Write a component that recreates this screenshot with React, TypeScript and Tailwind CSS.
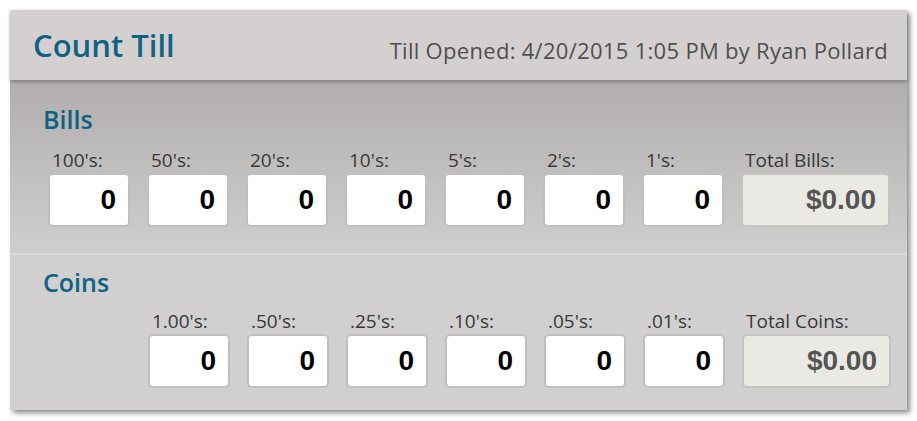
const bills = ["100's:", "50's:", "20's:", "10's:", "5's:", "2's:", "1's:"];
const coins = ["1.00's:", ".50's:", ".25's:", ".10's:", ".05's:", ".01's:"];

const font = { fontFamily: '"Open Sans", "DejaVu Sans", sans-serif' };

const CountField = ({ label }: { label: string }) => (
  <div className="flex w-[82px] shrink-0 flex-col">
    <div className="mb-[3px] pl-1 text-[19px] leading-[20px] text-[#383838]">{label}</div>
    <div className="flex h-[54px] items-center justify-end rounded-[5px] border-2 border-[#c0bebe] bg-white pr-[12px] font-['Liberation_Sans',sans-serif] text-[28px] font-bold text-black">
      0
    </div>
  </div>
);

const TotalField = ({ label }: { label: string }) => (
  <div className="flex w-[149px] shrink-0 flex-col">
    <div className="mb-[3px] pl-1 text-[19px] leading-[20px] text-[#383838]">{label}</div>
    <div className="flex h-[54px] items-center justify-end rounded-[5px] border-2 border-[#c6c4c1] bg-[#eae9e3] pr-[12px] font-['Liberation_Sans',sans-serif] text-[28px] font-bold text-[#555555]">
      $0.00
    </div>
  </div>
);

const App = () => {
  return (
    <div className="h-[421px] w-[917px] bg-white p-[10px]" style={font}>
      <div className="w-[897px] shadow-[3px_3px_5px_rgba(0,0,0,0.45)]">
        <div className="relative flex h-[70px] items-start justify-between bg-[#d5d0d0] pl-[23px] pr-[19px] shadow-[0_2px_3px_rgba(0,0,0,0.25)]">
          <h1 className="pt-[17px] text-[31px] font-semibold leading-[36px] text-[#0f6283]">Count Till</h1>
          <div className="pt-[27px] text-[22px] leading-[26px] tracking-[0.3px] text-[#4f4f4f]">
            Till Opened: 4/20/2015 1:05 PM by Ryan Pollard
          </div>
        </div>

        <div className="h-[173px] bg-gradient-to-b from-[#b2aeae] to-[#cfcdcd] pl-[33px] pt-[24px]">
          <h2 className="text-[25px] font-semibold leading-[30px] text-[#0f6283]">Bills</h2>
          <div className="mt-[16px] flex gap-[17px] pl-[5px]">
            {bills.map((b) => (
              <CountField key={b} label={b} />
            ))}
            <TotalField label="Total Bills:" />
          </div>
        </div>

        <div className="h-[2px] bg-[#dcdada]" />

        <div className="h-[155px] bg-[#d1cfcf] pl-[33px] pt-[12px]">
          <h2 className="text-[25px] font-semibold leading-[30px] text-[#0f6283]">Coins</h2>
          <div className="mt-[14px] flex gap-[17px] pl-[105px]">
            {coins.map((c) => (
              <CountField key={c} label={c} />
            ))}
            <TotalField label="Total Coins:" />
          </div>
        </div>
      </div>
    </div>
  );
};

export default App;
